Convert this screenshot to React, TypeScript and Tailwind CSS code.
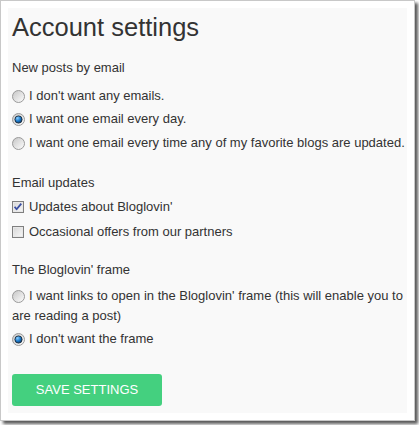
function Radio({ checked = false }: { checked?: boolean }) {
  return (
    <svg width="13" height="13" viewBox="0 0 13 13" className="shrink-0">
      <defs>
        <linearGradient id="rf" x1="0" y1="0" x2="1" y2="1">
          <stop offset="0" stopColor="#c4c4c4" />
          <stop offset="1" stopColor="#ffffff" />
        </linearGradient>
        <radialGradient id="rd" cx="0.35" cy="0.3" r="0.8">
          <stop offset="0" stopColor="#8fd0ff" />
          <stop offset="0.5" stopColor="#1f7fd0" />
          <stop offset="1" stopColor="#0b2f5c" />
        </radialGradient>
      </defs>
      <circle cx="6.5" cy="6.5" r="6" fill="url(#rf)" stroke="#9a9a9a" strokeWidth="1" />
      {checked && <circle cx="6.5" cy="6.5" r="3.6" fill="url(#rd)" stroke="#1a2a3a" strokeWidth="0.9" />}
    </svg>
  )
}

function Checkbox({ checked = false }: { checked?: boolean }) {
  return (
    <svg width="12" height="12" viewBox="0 0 12 12" className="shrink-0">
      <defs>
        <linearGradient id="cf" x1="0" y1="0" x2="1" y2="1">
          <stop offset="0" stopColor="#d4d4d4" />
          <stop offset="1" stopColor="#fafafa" />
        </linearGradient>
      </defs>
      <rect x="0.5" y="0.5" width="11" height="11" fill="url(#cf)" stroke="#7f7f7f" strokeWidth="1" />
      <rect x="1.5" y="1.5" width="9" height="9" fill="none" stroke="#e8e8e8" strokeWidth="1" />
      {checked && (
        <path d="M2.6 5.8 L4.6 8.3 L9.3 2.6" fill="none" stroke="#3a4fa3" strokeWidth="1.8" strokeLinejoin="round" />
      )}
    </svg>
  )
}

function Option({ children, control, className = "" }: { children: React.ReactNode; control: React.ReactNode; className?: string }) {
  return (
    <div className={`flex items-center gap-[4px] h-[20px] whitespace-nowrap ${className}`}>
      {control}
      <span>{children}</span>
    </div>
  )
}

export default function App() {
  return (
    <div className="w-[419px] h-[425px] bg-white" style={{ fontFamily: '"Liberation Sans", Arial, sans-serif' }}>
      <div className="w-[415px] h-[421px] border border-[#c8c8c8] bg-white p-[7px] shadow-[3px_3px_3px_rgba(0,0,0,0.65)]">
        <div className="h-full bg-[#f9f9f9] pl-[4px] text-[13px] leading-[20px] text-[#333] overflow-hidden">
          <h1 className="mt-[3px] text-[25.5px] leading-[32px] text-[#333]">Account settings</h1>

          <div className="mt-[15px]">New posts by email</div>
          <Option className="mt-[8px]" control={<Radio />}>I don't want any emails.</Option>
          <Option className="mt-[3px]" control={<Radio checked />}>I want one email every day.</Option>
          <Option className="mt-[4px]" control={<Radio />}>I want one email every time any of my favorite blogs are updated.</Option>

          <div className="mt-[20px]">Email updates</div>
          <Option className="mt-[4px] gap-[5px]" control={<Checkbox checked />}>Updates about Bloglovin'</Option>
          <Option className="mt-[5px] gap-[5px]" control={<Checkbox />}>Occasional offers from our partners</Option>

          <div className="mt-[18px]">The Bloglovin' frame</div>
          <div className="mt-[6px] whitespace-nowrap">
            <div className="flex items-center gap-[4px] h-[20px]">
              <Radio />
              <span>I want links to open in the Bloglovin' frame (this will enable you to</span>
            </div>
            <div>are reading a post)</div>
          </div>
          <Option className="mt-[3px]" control={<Radio checked />}>I don't want the frame</Option>

          <button className="mt-[25px] w-[150px] h-[32px] rounded-[3px] bg-[#44d07f] text-white text-[13px]">
            SAVE SETTINGS
          </button>
        </div>
      </div>
    </div>
  )
}
